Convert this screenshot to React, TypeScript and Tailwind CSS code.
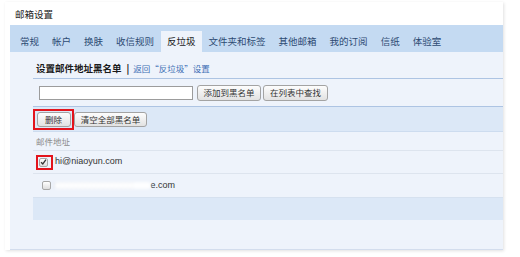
const tabs = ["常规", "帐户", "换肤", "收信规则", "反垃圾", "文件夹和标签", "其他邮箱", "我的订阅", "信纸", "体验室"];

function Btn({ label, w }: { label: string; w: string }) {
  return (
    <div
      className={`${w} h-full flex items-center justify-center rounded-[3px] border border-[#a3a3a3] bg-gradient-to-b from-[#fdfdfd] to-[#e2e2e2] text-[8.5px] leading-none text-[#333]`}
    >
      {label}
    </div>
  );
}

function Check({ checked }: { checked?: boolean }) {
  return (
    <div className="w-[9px] h-[9px] rounded-[2px] border border-[#a8a8a8] bg-gradient-to-b from-[#ffffff] to-[#dedede] flex items-center justify-center">
      {checked && (
        <svg width="8" height="8" viewBox="0 0 8 8">
          <path d="M1.2 4.2 L3.2 6.2 L6.8 1.4" fill="none" stroke="#333" strokeWidth="1.5" />
        </svg>
      )}
    </div>
  );
}

export default function App() {
  return (
    <div className="w-[520px] h-[257px] bg-white pt-[2px] pl-[5px] font-['Noto_Sans_CJK_SC',sans-serif]">
      <div className="w-[498px] h-[248px] bg-white shadow-[1px_1px_3px_rgba(0,0,0,0.12)] flex flex-col">
        <div className="h-[23px] pl-[10px] pt-[6px] text-[9.5px] leading-[12px] text-[#222]">邮箱设置</div>
        <div className="ml-[5px] flex-1 flex flex-col">
          <div className="h-[27px] bg-[#c4daf2] flex items-end pl-[3.5px]">
            {tabs.map((t) => (
              <div
                key={t}
                className={`h-[21px] px-[6.5px] leading-[21px] text-[9.5px] ${
                  t === "反垃圾" ? "bg-[#eef3fb] text-[#1a1a1a]" : "text-[#2d4a73]"
                }`}
              >
                {t}
              </div>
            ))}
          </div>
          <div className="flex-1 bg-[#eef3fb] border-b border-[#d3dded] pl-[23px] flex flex-col">
            <div className="h-[27px] pt-[10px] pl-[3px] border-b border-[#adc4e3] flex items-start leading-[12px]">
              <span className="text-[9.5px] font-bold text-[#1a1a1a]">设置邮件地址黑名单</span>
              <span className="text-[9.5px] font-bold text-[#111] ml-[5px]">|</span>
              <span className="text-[8.5px] text-[#3c6eb4] ml-[4px]">返回“反垃圾”设置</span>
            </div>
            <div className="h-[28px] pl-[6px] border-b border-[#adc4e3] flex items-center">
              <div className="w-[154px] h-[14px] bg-white border border-[#9c9c9c]" />
              <div className="h-[16px] ml-[4px] flex">
                <Btn label="添加到黑名单" w="w-[64px]" />
              </div>
              <div className="h-[16px] ml-[2px] flex">
                <Btn label="在列表中查找" w="w-[65px]" />
              </div>
            </div>
            <div className="h-[25px] bg-[#dce8f7] border-b border-[#cddcef] flex items-center">
              <div className="w-[41px] h-[21px] border-2 border-[#e3141c] flex items-center justify-center">
                <div className="h-[15px] flex">
                  <Btn label="删除" w="w-[34px]" />
                </div>
              </div>
              <div className="h-[15px] flex">
                <Btn label="清空全部黑名单" w="w-[73px]" />
              </div>
            </div>
            <div className="h-[19px] pl-[3px] border-b border-[#dde4ee] flex items-center text-[8.5px] text-[#8c8c8c]">
              邮件地址
            </div>
            <div className="h-[23px] border-b border-[#dde4ee] flex items-center">
              <div className="ml-[3px] w-[17px] h-[15px] border-2 border-[#e3141c] flex items-center pl-[1px]">
                <Check checked />
              </div>
              <span className="ml-[2px] text-[9px] text-[#333] font-['Liberation_Sans',sans-serif]">hi@niaoyun.com</span>
            </div>
            <div className="h-[24px] border-b border-[#d6e1ef] flex items-center">
              <div className="ml-[8.5px]">
                <Check />
              </div>
              <div className="ml-[3px] w-[97px] h-[9px] relative flex items-center">
                <span className="text-[9px] text-[#c9cfd8] font-['Liberation_Sans',sans-serif] blur-[1px]">xxxxxxxxxxxxxxxxxx</span>
                <div className="absolute inset-x-0 top-[1px] h-[7px] rounded-full bg-white/90 blur-[1.5px]" />
              </div>
              <span className="text-[9px] text-[#333] font-['Liberation_Sans',sans-serif]">e.com</span>
            </div>
            <div className="h-[22px] bg-[#dce8f7]" />
          </div>
        </div>
      </div>
    </div>
  );
}
